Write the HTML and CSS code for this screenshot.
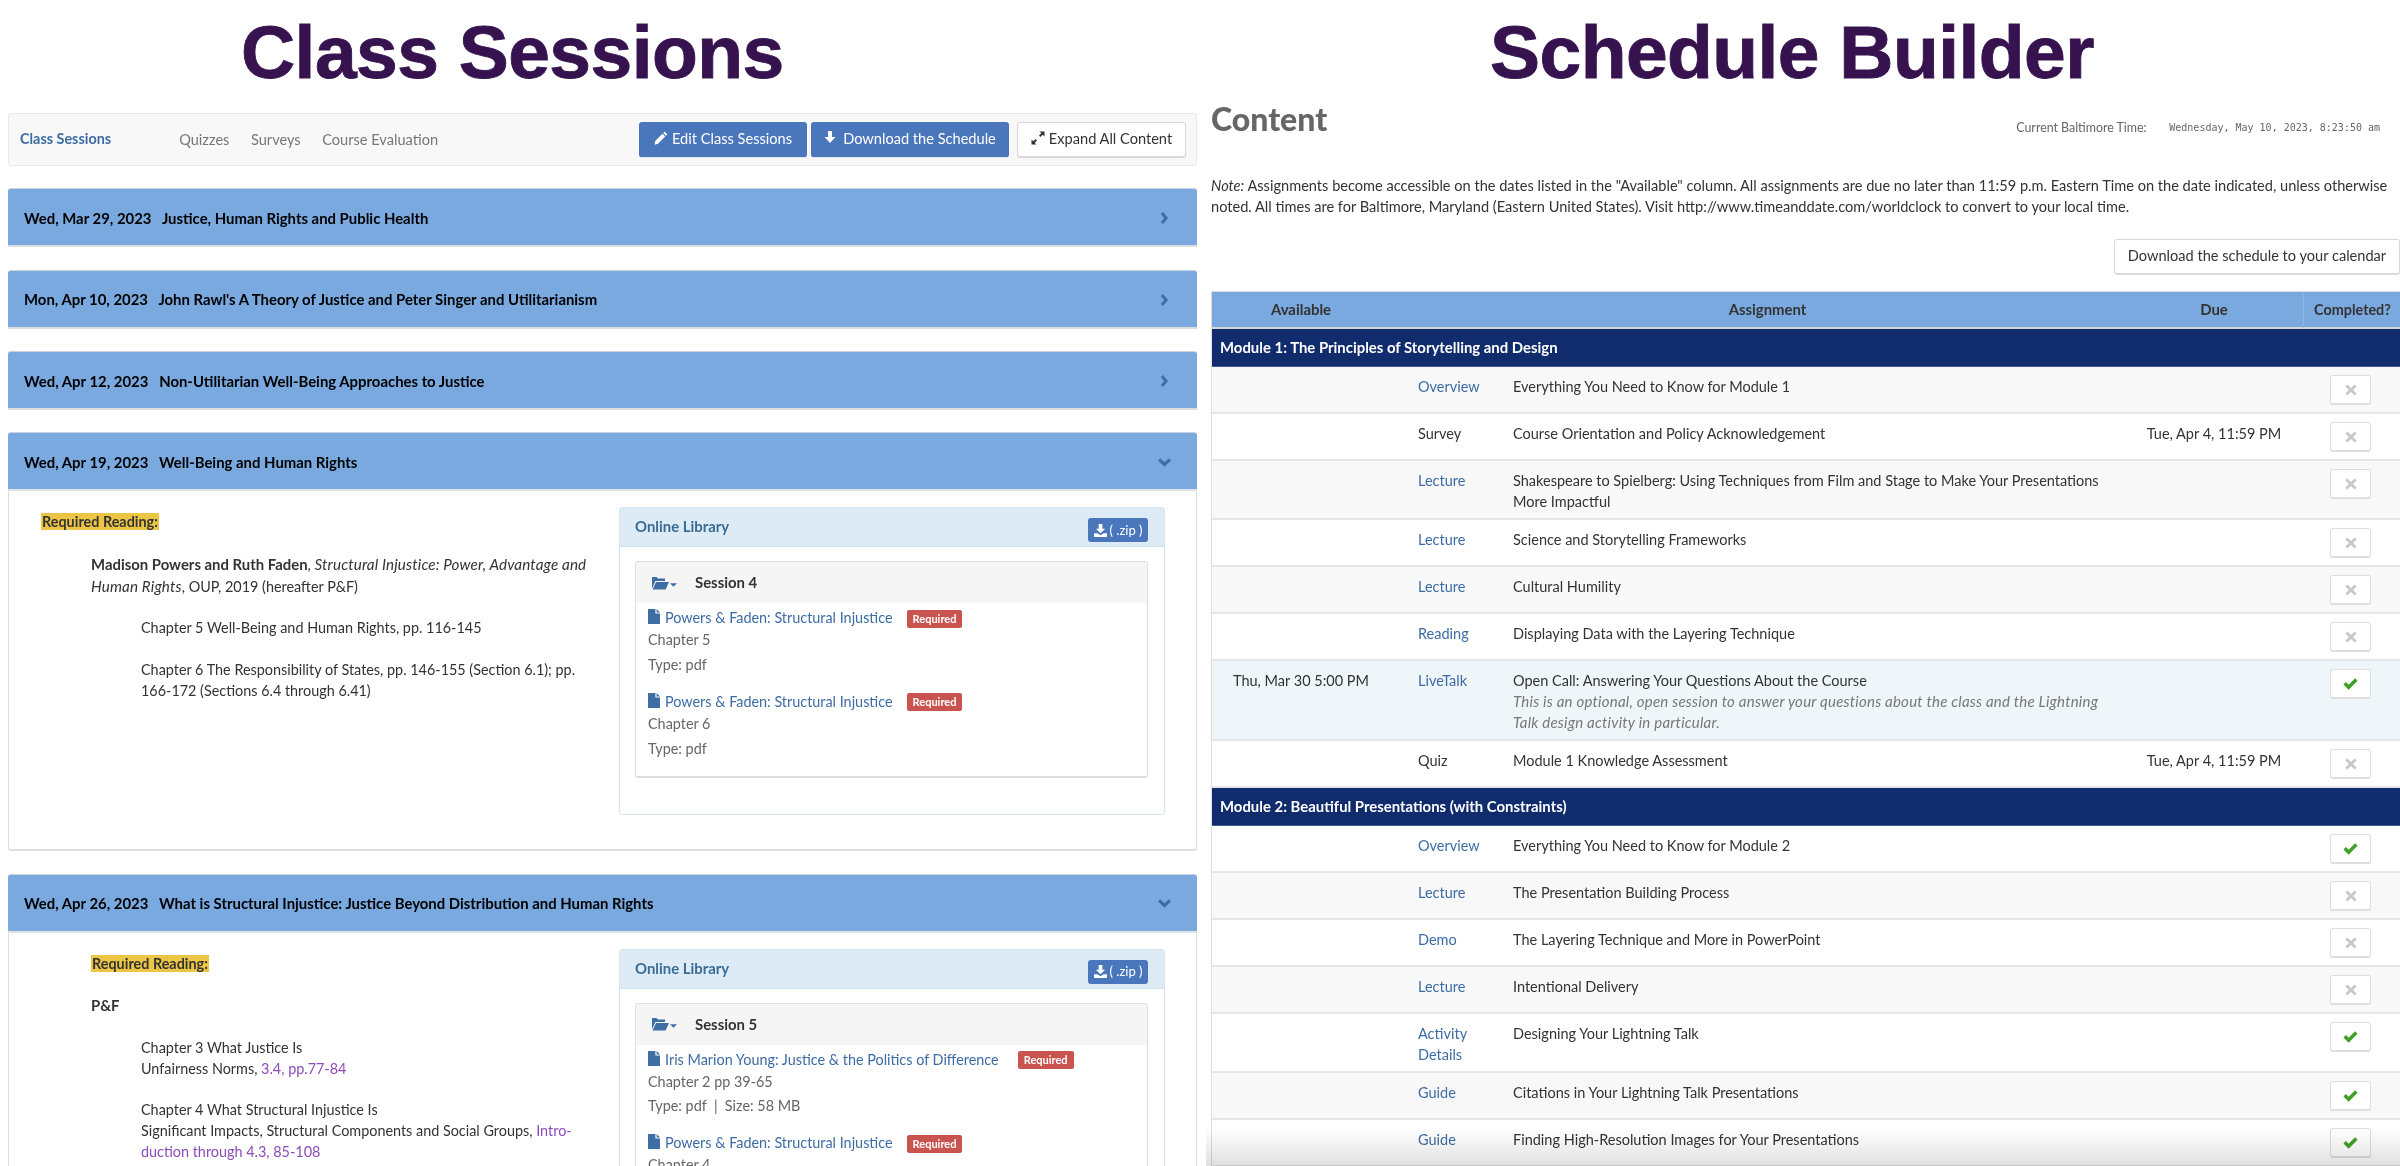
FILE: index.html
```html
<!DOCTYPE html>
<html lang="en">
<head>
<meta charset="utf-8">
<title>Class Sessions and Schedule Builder</title>
<link rel="stylesheet" href="styles.css">
</head>
<body>
<svg class="defs" width="0" height="0" aria-hidden="true">
  <symbol id="i-pencil" viewBox="0 0 14 14"><path d="M10.6 0.6 13.4 3.4 12 4.8 9.2 2ZM8.4 2.8 11.2 5.6 4 12.8 0.6 13.8 1.2 10Z" fill="currentColor"/></symbol>
  <symbol id="i-down" viewBox="0 0 12 14"><path d="M4 1H8V7H11.5L6 13 0.5 7H4Z" fill="currentColor"/></symbol>
  <symbol id="i-expand" viewBox="0 0 14 14"><path d="M8.5 0.5H13.5V5.5L11.7 3.7 9.4 6 8 4.6 10.3 2.3ZM5.5 13.5H0.5V8.5L2.3 10.3 4.6 8 6 9.4 3.7 11.7Z" fill="currentColor"/></symbol>
  <symbol id="i-right" viewBox="0 0 8 12"><path d="M0.8 2 3 0 8 6 3 12 0.8 10 4.2 6Z" fill="currentColor"/></symbol>
  <symbol id="i-open" viewBox="0 0 12 8"><path d="M0 2.2 2 0 6 3.8 10 0 12 2.2 6 8Z" fill="currentColor"/></symbol>
  <symbol id="i-caret" viewBox="0 0 8 4"><path d="M0 0H8L4 4Z" fill="currentColor"/></symbol>
  <symbol id="i-folder" viewBox="0 0 18 14"><path d="M1 1H5.5L7 2.6H14V5H4.4L1 12.5ZM5 6H18L14.6 13.6H1.6Z" fill="currentColor"/></symbol>
  <symbol id="i-file" viewBox="0 0 12 15"><path d="M0 0H7.4V4.6H12V15H0ZM8.6 0 12 3.4H8.6Z" fill="currentColor"/></symbol>
  <symbol id="i-save" viewBox="0 0 14 14"><path d="M5 0H9V5H12L7 10 2 5H5ZM0 10H3.6L7 12 10.4 10H14V14H0Z" fill="currentColor"/></symbol>
  <symbol id="i-check" viewBox="0 0 16 13"><path d="M0.4 7 3 4.4 6 7.4 13 0.4 15.6 3 6 12.6Z" fill="currentColor"/></symbol>
  <symbol id="i-x" viewBox="0 0 12 12"><path d="M2.4 0.4 6 4 9.6 0.4 11.6 2.4 8 6 11.6 9.6 9.6 11.6 6 8 2.4 11.6 0.4 9.6 4 6 0.4 2.4Z" fill="currentColor"/></symbol>
</svg>
<main class="page">
  <section class="left">
    <h1 class="big-title big-title-left">Class Sessions</h1>
    <nav class="toolbar">
      <a class="tab tab-active">Class Sessions</a>
      <a class="tab">Quizzes</a>
      <a class="tab">Surveys</a>
      <a class="tab">Course Evaluation</a>
      <div class="tool-btns">
        <a class="btn btn-blue btn-edit"><svg class="ic14"><use href="#i-pencil"/></svg>Edit Class Sessions</a>
        <a class="btn btn-blue btn-dl"><svg class="ic-down"><use href="#i-down"/></svg>Download the Schedule</a>
        <a class="btn btn-white btn-expand"><svg class="ic14"><use href="#i-expand"/></svg>Expand All Content</a>
      </div>
    </nav>

    <div class="bar"><span class="bar-text">Wed, Mar 29, 2023 &nbsp; Justice, Human Rights and Public Health</span><svg class="chev-r"><use href="#i-right"/></svg></div>
    <div class="bar"><span class="bar-text">Mon, Apr 10, 2023 &nbsp; John Rawl's A Theory of Justice and Peter Singer and Utilitarianism</span><svg class="chev-r"><use href="#i-right"/></svg></div>
    <div class="bar"><span class="bar-text">Wed, Apr 12, 2023 &nbsp; Non-Utilitarian Well-Being Approaches to Justice</span><svg class="chev-r"><use href="#i-right"/></svg></div>

    <article class="session">
      <div class="bar bar-open"><span class="bar-text">Wed, Apr 19, 2023 &nbsp; Well-Being and Human Rights</span><svg class="chev-d"><use href="#i-open"/></svg></div>
      <div class="session-body session-body-4">
        <div class="reading">
          <p><mark class="hl">Required Reading:</mark></p>
          <p class="ind1"><b>Madison Powers and Ruth Faden</b>, <i>Structural Injustice: Power, Advantage and<br>Human Rights</i>, OUP, 2019 (hereafter P&amp;F)</p>
          <p class="ind2">Chapter 5 Well-Being and Human Rights, pp. 116-145</p>
          <p class="ind2">Chapter 6 The Responsibility of States, pp. 146-155 (Section 6.1); pp.<br>166-172 (Sections 6.4 through 6.41)</p>
        </div>
        <aside class="library">
          <div class="lib-head"><span class="lib-title">Online Library</span><a class="zip"><svg class="ic-save"><use href="#i-save"/></svg>( .zip )</a></div>
          <div class="lib-body">
            <div class="card">
              <div class="card-head"><svg class="ic-folder"><use href="#i-folder"/></svg><svg class="ic-caret"><use href="#i-caret"/></svg><span class="card-title">Session 4</span></div>
              <div class="item">
                <div class="item-line"><svg class="ic-file"><use href="#i-file"/></svg><a class="item-link">Powers &amp; Faden: Structural Injustice</a><span class="badge">Required</span></div>
                <div class="item-sub">Chapter 5</div>
                <div class="item-type">Type: pdf</div>
              </div>
              <div class="item">
                <div class="item-line"><svg class="ic-file"><use href="#i-file"/></svg><a class="item-link">Powers &amp; Faden: Structural Injustice</a><span class="badge">Required</span></div>
                <div class="item-sub">Chapter 6</div>
                <div class="item-type">Type: pdf</div>
              </div>
            </div>
          </div>
        </aside>
      </div>
    </article>

    <article class="session session-last">
      <div class="bar bar-open"><span class="bar-text">Wed, Apr 26, 2023 &nbsp; What is Structural Injustice: Justice Beyond Distribution and Human Rights</span><svg class="chev-d"><use href="#i-open"/></svg></div>
      <div class="session-body">
        <div class="reading">
          <p class="ind1"><mark class="hl">Required Reading:</mark></p>
          <p class="ind1"><b>P&amp;F</b></p>
          <p class="ind2">Chapter 3 What Justice Is<br>Unfairness Norms, <a class="purple">3.4, pp.77-84</a></p>
          <p class="ind2">Chapter 4 What Structural Injustice Is<br>Significant Impacts, Structural Components and Social Groups, <a class="purple">Intro-<br>duction through 4.3, 85-108</a></p>
        </div>
        <aside class="library">
          <div class="lib-head"><span class="lib-title">Online Library</span><a class="zip"><svg class="ic-save"><use href="#i-save"/></svg>( .zip )</a></div>
          <div class="lib-body">
            <div class="card">
              <div class="card-head"><svg class="ic-folder"><use href="#i-folder"/></svg><svg class="ic-caret"><use href="#i-caret"/></svg><span class="card-title">Session 5</span></div>
              <div class="item">
                <div class="item-line"><svg class="ic-file"><use href="#i-file"/></svg><a class="item-link">Iris Marion Young: Justice &amp; the Politics of Difference</a><span class="badge badge-wide">Required</span></div>
                <div class="item-sub">Chapter 2 pp 39-65</div>
                <div class="item-type">Type: pdf &nbsp;|&nbsp; Size: 58 MB</div>
              </div>
              <div class="item">
                <div class="item-line"><svg class="ic-file"><use href="#i-file"/></svg><a class="item-link">Powers &amp; Faden: Structural Injustice</a><span class="badge">Required</span></div>
                <div class="item-sub">Chapter 4</div>
              </div>
            </div>
          </div>
        </aside>
      </div>
    </article>
  </section>

  <section class="right">
    <h1 class="big-title big-title-right">Schedule Builder</h1>
    <div class="content-head">
      <h2 class="content-title">Content</h2>
      <div class="clock"><span class="clock-label">Current Baltimore Time:</span><span class="clock-value">Wednesday, May 10, 2023, 8:23:50 am</span></div>
    </div>
    <p class="note"><i>Note:</i> Assignments become accessible on the dates listed in the "Available" column. All assignments are due no later than 11:59 p.m. Eastern Time on the date indicated, unless otherwise noted. All times are for Baltimore, Maryland (Eastern United States). Visit http://www.timeanddate.com/worldclock to convert to your local time.</p>
    <div class="cal-row"><a class="btn btn-white btn-cal">Download the schedule to your calendar</a></div>
    <table class="sched">
      <colgroup><col class="c1"><col class="c2"><col class="c3"><col class="c4"><col class="c5"></colgroup>
      <thead>
        <tr><th>Available</th><th colspan="2" class="th-assign">Assignment</th><th>Due</th><th class="th-done">Completed?</th></tr>
      </thead>
      <tbody>
        <tr class="module"><td colspan="5">Module 1: The Principles of Storytelling and Design</td></tr>
        <tr class="alt"><td></td><td class="type"><a>Overview</a></td><td>Everything You Need to Know for Module 1</td><td class="due"></td><td><span class="toggle off"><svg class="ic-x"><use href="#i-x"/></svg></span></td></tr>
        <tr><td></td><td class="type">Survey</td><td>Course Orientation and Policy Acknowledgement</td><td class="due">Tue, Apr 4, 11:59 PM</td><td><span class="toggle off"><svg class="ic-x"><use href="#i-x"/></svg></span></td></tr>
        <tr class="alt"><td></td><td class="type"><a>Lecture</a></td><td>Shakespeare to Spielberg: Using Techniques from Film and Stage to Make Your Presentations More Impactful</td><td class="due"></td><td><span class="toggle off"><svg class="ic-x"><use href="#i-x"/></svg></span></td></tr>
        <tr><td></td><td class="type"><a>Lecture</a></td><td>Science and Storytelling Frameworks</td><td class="due"></td><td><span class="toggle off"><svg class="ic-x"><use href="#i-x"/></svg></span></td></tr>
        <tr class="alt"><td></td><td class="type"><a>Lecture</a></td><td>Cultural Humility</td><td class="due"></td><td><span class="toggle off"><svg class="ic-x"><use href="#i-x"/></svg></span></td></tr>
        <tr><td></td><td class="type"><a>Reading</a></td><td>Displaying Data with the Layering Technique</td><td class="due"></td><td><span class="toggle off"><svg class="ic-x"><use href="#i-x"/></svg></span></td></tr>
        <tr class="live"><td class="avail">Thu, Mar 30 5:00 PM</td><td class="type"><a>LiveTalk</a></td><td>Open Call: Answering Your Questions About the Course<br><i class="hint">This is an optional, open session to answer your questions about the class and the Lightning<br>Talk design activity in particular.</i></td><td class="due"></td><td><span class="toggle"><svg class="ic-check"><use href="#i-check"/></svg></span></td></tr>
        <tr><td></td><td class="type">Quiz</td><td>Module 1 Knowledge Assessment</td><td class="due">Tue, Apr 4, 11:59 PM</td><td><span class="toggle off"><svg class="ic-x"><use href="#i-x"/></svg></span></td></tr>
        <tr class="module"><td colspan="5">Module 2: Beautiful Presentations (with Constraints)</td></tr>
        <tr><td></td><td class="type"><a>Overview</a></td><td>Everything You Need to Know for Module 2</td><td class="due"></td><td><span class="toggle"><svg class="ic-check"><use href="#i-check"/></svg></span></td></tr>
        <tr class="alt"><td></td><td class="type"><a>Lecture</a></td><td>The Presentation Building Process</td><td class="due"></td><td><span class="toggle off"><svg class="ic-x"><use href="#i-x"/></svg></span></td></tr>
        <tr><td></td><td class="type"><a>Demo</a></td><td>The Layering Technique and More in PowerPoint</td><td class="due"></td><td><span class="toggle off"><svg class="ic-x"><use href="#i-x"/></svg></span></td></tr>
        <tr class="alt"><td></td><td class="type"><a>Lecture</a></td><td>Intentional Delivery</td><td class="due"></td><td><span class="toggle off"><svg class="ic-x"><use href="#i-x"/></svg></span></td></tr>
        <tr><td></td><td class="type"><a>Activity Details</a></td><td>Designing Your Lightning Talk</td><td class="due"></td><td><span class="toggle"><svg class="ic-check"><use href="#i-check"/></svg></span></td></tr>
        <tr class="alt"><td></td><td class="type"><a>Guide</a></td><td>Citations in Your Lightning Talk Presentations</td><td class="due"></td><td><span class="toggle"><svg class="ic-check"><use href="#i-check"/></svg></span></td></tr>
        <tr><td></td><td class="type"><a>Guide</a></td><td>Finding High-Resolution Images for Your Presentations</td><td class="due"></td><td><span class="toggle"><svg class="ic-check"><use href="#i-check"/></svg></span></td></tr>
      </tbody>
    </table>
    <div class="fade"></div>
  </section>
</main>
</body>
</html>
```
FILE: styles.css
```css
* { box-sizing: border-box; }
html, body { margin: 0; height: 1166px; overflow: hidden; background: #fff; }
body { font-family: "Lato", "Open Sans", sans-serif; font-size: 14.4px; line-height: 20.8px; color: #333; }
.defs { position: absolute; }
svg { display: inline-block; flex: none; }
a { color: #3d6ca4; text-decoration: none; }
p { margin: 0 0 20.8px; }
b { font-size: 14.9px; }

.page { display: flex; width: 2400px; height: 1166px; overflow: hidden; }
.left { width: 1189px; margin-left: 8px; flex: none; }
.right { width: 1189px; margin-left: 14px; flex: none; position: relative; }

.big-title { margin: 0; font-family: "Liberation Sans", Arial, sans-serif; font-weight: 700; font-size: 75px; line-height: 80px; color: #36134f; white-space: nowrap; letter-spacing: -0.55px; -webkit-text-stroke: 0.9px #36134f; }
.big-title-left { height: 113px; padding: 12px 0 0 233px; }
.big-title-right { height: 100px; padding: 12px 0 0 279px; }

.toolbar { height: 53px; display: flex; align-items: center; border: 1px solid #e9e9e9; border-radius: 3px; background: #f8f8f8; padding: 0 10px 0 11px; }
.tab { color: #777; margin-right: 21.5px; margin-top: 2px; font-size: 14.6px; }
.tab-active { color: #3d6ca4; font-weight: 700; margin-right: 68px; margin-top: 0; font-size: 14.4px; }
.tool-btns { margin-left: auto; display: flex; align-items: center; }
.btn { display: flex; align-items: center; justify-content: center; height: 36px; border-radius: 3px; white-space: nowrap; font-size: 14.6px; }
.btn-blue { background: #4a76bc; color: #fff; border-bottom: 1px solid #e0e6f0; }
.btn-white { background: #fff; color: #333; border: 1px solid #d9d9d9; border-bottom-width: 2px; }
.btn-edit { width: 168px; margin-right: 4px; }
.btn-dl { width: 198px; margin-right: 8px; }
.btn-expand { width: 169px; }
.ic14 { width: 14px; height: 14px; margin-right: 4px; margin-top: -3px; }
.ic-down { width: 12px; height: 14px; margin-right: 7px; margin-top: -4px; }

.bar { height: 59px; margin-top: 22.33px; display: flex; align-items: center; justify-content: space-between; padding: 2px 29.5px 0 16px; background: #79a9df; border-top: 1px solid #c9d2dc; border-bottom: 2px solid #dcdcdc; border-radius: 3px 3px 0 0; color: #000; }
.bar-text { font-weight: 700; font-size: 14.9px; }
.chev-r { width: 8px; height: 12px; color: #3c6ea8; }
.chev-d { width: 13px; height: 9px; color: #3c6ea8; margin-right: -3px; }

.session { margin-top: 22.33px; }
.session .bar { margin-top: 0; border-bottom: 2px solid #dfe3e8; }
.session-body { display: flex; padding: 16px 21px 0 32px; border: 1px solid #dedede; border-top: 0; border-bottom-width: 2px; border-radius: 0 0 3px 3px; }
.session-body-4 { height: 360px; }
.reading { width: 578px; flex: none; padding-top: 5px; color: #333; }
.reading i { font-size: 15.2px; letter-spacing: 0.14px; }
.ind1 { margin-left: 50px; }
.ind2 { margin-left: 100px; }
.hl { background: #edc544; color: #333; padding: 0 1px; font-weight: 700; }
.purple { color: #8d4bb8; }

.library { width: 546px; flex: none; border: 1px solid #d4e6f1; border-radius: 3px; height: 308px; margin-bottom: 24px; }
.session-last .library { height: 500px; }
.lib-head { height: 39px; display: flex; justify-content: space-between; padding: 0 16px 0 15px; background: #dcebf6; border-bottom: 1px solid #cfe2ef; }
.lib-title { color: #3a6c94; font-weight: 700; font-size: 14.9px; margin-top: 8px; }
.zip { display: flex; align-items: center; justify-content: center; width: 60px; height: 24px; margin-top: 10px; background: #4a76bc; color: #fff; border-radius: 3px; font-size: 13px; }
.ic-save { width: 13px; height: 13px; margin-right: 3px; }
.lib-body { padding: 14px 16px 0 15px; }
.card { border: 1px solid #dedede; border-bottom-width: 2px; border-radius: 3px; height: 217px; }
.session-last .card { height: 400px; }
.card-head { height: 41px; display: flex; align-items: center; padding-left: 15px; background: #f5f5f5; }
.ic-folder { width: 18px; height: 14px; color: #3f6ea5; }
.ic-caret { width: 7px; height: 4px; color: #3f6ea5; margin: 4px 0 0 1px; }
.card-title { margin-left: 18px; font-weight: 700; font-size: 14.9px; color: #333; }
.item { padding: 5px 11px 0 12px; margin-bottom: 11px; }
.item-line { display: flex; align-items: center; height: 21px; }
.ic-file { width: 12px; height: 15px; color: #3f6ea5; margin-right: 5px; margin-top: -4px; }
.item-link { font-size: 14.4px; }
.badge { margin-left: 14px; background: #c9544f; color: #fff; font-size: 11px; font-weight: 700; line-height: 17px; height: 18px; padding: 0 6px; border-radius: 2px; }
.badge-wide { margin-left: 19px; }
.item-sub { margin-top: 1px; color: #666; }
.item-type { margin-top: 4px; color: #666; }

.content-head { display: flex; justify-content: space-between; height: 56px; padding-right: 20px; }
.content-title { margin: 0; font-size: 32px; line-height: 44px; margin-top: -3px; font-weight: 900; color: #666; }
.clock { display: flex; font-size: 12.4px; color: #666; margin-top: 18px; }
.clock-label { width: 153px; }
.clock-value { font-family: "DejaVu Sans Mono", monospace; font-size: 10px; color: #666; }
.note { margin: 18.5px 0 0; line-height: 21.6px; color: #333; font-size: 14.58px; }
.cal-row { display: flex; justify-content: flex-end; margin-top: 21.5px; }
.btn-cal { width: 286px; height: 36px; }

.sched { width: 1189px; margin-top: 16px; table-layout: fixed; border-collapse: separate; border-spacing: 0; border-left: 1px solid #dcdcdc; line-height: 21px; font-size: 14.5px; }
.c1 { width: 178px; } .c2 { width: 115px; } .c3 { width: 620px; } .c4 { width: 178px; } .c5 { width: 97px; }
.sched th { height: 38px; padding: 0; background: #79a9df; border-top: 1px solid #dcdcdc; border-bottom: 2px solid #d6d6d6; font-weight: 700; font-size: 14.9px; color: #333; text-align: center; }
.sched .th-assign { padding-left: 20px; }
.sched .th-done { border-left: 1px solid #8fb7e4; padding-left: 1px; font-size: 14.4px; }
.sched td { padding: 9px 8px 6px; border-bottom: 2px solid #e6e6e6; vertical-align: top; }
.sched .module td { height: 38px; padding: 0 8px; background: #112c6d; color: #fff; font-weight: 700; font-size: 14.9px; vertical-align: middle; border-bottom: 1px solid #3f5d96; }
.alt td { background: #f8f8f8; }
.live td { background: #eff6fa; }
.sched .type { padding-left: 28px; padding-right: 8px; }
.avail { text-align: center; white-space: nowrap; }
.due { text-align: center; white-space: nowrap; }
.hint { color: #777; font-size: 15px; letter-spacing: 0.22px; white-space: nowrap; }
.toggle { display: flex; align-items: center; justify-content: center; width: 41px; height: 30px; margin: -1px 0 1px 19px; background: #fff; border: 1px solid #dedede; border-bottom-width: 2px; border-radius: 3px; color: #3fa023; }
.toggle.off { color: #c8c8c8; }
.ic-check { width: 15px; height: 12px; }
.ic-x { width: 12px; height: 12px; }

.fade { position: absolute; left: -5px; right: 0; top: 1128px; height: 38px; background: linear-gradient(to bottom, #fff, #e0e0e0); mix-blend-mode: multiply; pointer-events: none; }
```
